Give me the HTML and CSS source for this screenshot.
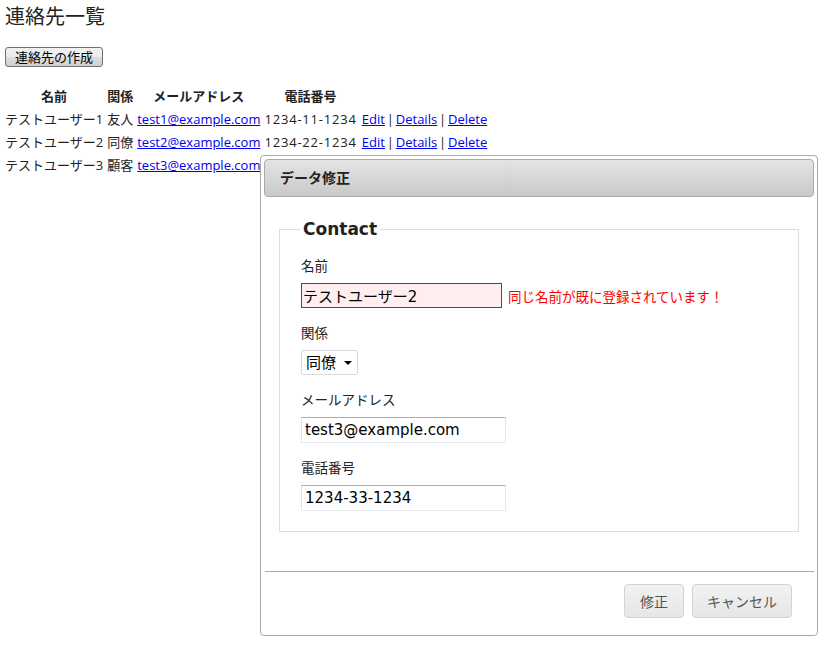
FILE: index.html
```html
<!DOCTYPE html>
<html lang="ja">
<head>
    <meta charset="UTF-8">
    <title>連絡先一覧</title>
    <link rel="stylesheet" href="styles.css">
</head>
<body>
    <h1>連絡先一覧</h1>
    <p class="actions"><button class="create-btn">連絡先の作成</button></p>
    <table class="contacts">
        <tr>
            <th>名前</th>
            <th>関係</th>
            <th>メールアドレス</th>
            <th>電話番号</th>
            <th></th>
        </tr>
        <tr>
            <td>テストユーザー1</td>
            <td>友人</td>
            <td><a href="#">test1@example.com</a></td>
            <td class="phone">1234-11-1234</td>
            <td class="links"><a href="#">Edit</a> | <a href="#">Details</a> | <a href="#">Delete</a></td>
        </tr>
        <tr>
            <td>テストユーザー2</td>
            <td>同僚</td>
            <td><a href="#">test2@example.com</a></td>
            <td class="phone">1234-22-1234</td>
            <td class="links"><a href="#">Edit</a> | <a href="#">Details</a> | <a href="#">Delete</a></td>
        </tr>
        <tr>
            <td>テストユーザー3</td>
            <td>顧客</td>
            <td><a href="#">test3@example.com</a></td>
            <td class="phone">1234-33-1234</td>
            <td class="links"><a href="#">Edit</a> | <a href="#">Details</a> | <a href="#">Delete</a></td>
        </tr>
    </table>

    <div class="dialog">
        <div class="dialog-titlebar">データ修正</div>
        <div class="dialog-content">
            <fieldset>
                <legend>Contact</legend>
                <label for="name">名前</label>
                <div class="field">
                    <input type="text" id="name" class="input-error" value="テストユーザー2">
                    <span class="field-error">同じ名前が既に登録されています！</span>
                </div>
                <label for="relation">関係</label>
                <div class="field">
                    <div class="select-box">同僚<span class="arrow"></span></div>
                </div>
                <label for="email">メールアドレス</label>
                <div class="field">
                    <input type="text" id="email" value="test3@example.com">
                </div>
                <label for="phone">電話番号</label>
                <div class="field">
                    <input type="text" id="phone" value="1234-33-1234">
                </div>
            </fieldset>
        </div>
        <div class="dialog-buttonpane">
            <button class="ui-btn">修正</button>
            <button class="ui-btn">キャンセル</button>
        </div>
    </div>
</body>
</html>
```

FILE: styles.css
```css
body {
    font-family: "Open Sans", "Noto Sans CJK JP", sans-serif;
    font-size: 13px;
    color: #222;
    margin: 0;
    padding: 0 5px;
    background-color: #fff;
}
h1 {
    font-size: 20px;
    font-weight: normal;
    margin: 4px 0 0;
    line-height: 26px;
}
.actions {
    margin: 17px 0 0;
}
.create-btn {
    font-family: inherit;
    font-size: 13px;
    width: 98px;
    height: 20px;
    padding: 0;
    line-height: 16px;
    color: #000;
    border: 1px solid #707070;
    border-radius: 3px;
    background: linear-gradient(#f2f2f2 0%, #ebebeb 50%, #dddddd 51%, #cfcfcf 100%);
}
.contacts {
    border-collapse: collapse;
    margin-top: 18px;
}
.contacts th {
    font-weight: bold;
    text-align: center;
    padding: 0 2px;
    height: 23px;
    line-height: 19px;
}
.contacts td {
    padding: 0 2px;
    height: 23px;
    line-height: 19px;
    white-space: nowrap;
}
.contacts td:first-child, .contacts th:first-child {
    padding-left: 0;
}
.contacts .phone {
    letter-spacing: 0.8px;
}
.contacts .links {
    word-spacing: -1.5px;
    padding-left: 3px;
}
a {
    color: #0000ee;
}
.dialog {
    position: absolute;
    left: 260px;
    top: 155px;
    width: 550px;
    height: 473px;
    padding: 3px;
    border: 1px solid #aaaaaa;
    border-radius: 4px;
    background-color: #fff;
    display: flex;
    flex-direction: column;
}
.dialog-titlebar {
    height: 36px;
    line-height: 36px;
    padding: 0 15px;
    border: 1px solid #aaaaaa;
    border-radius: 4px;
    background: linear-gradient(#e4e4e4, #c9c9c9);
    font-weight: bold;
    font-size: 14px;
    color: #222;
}
.dialog-content {
    padding: 22px 15px 0 15px;
    flex: 1;
}
fieldset {
    border: 1px solid #dddddd;
    margin: 0;
    padding: 17px 21px 20px;
}
legend {
    font-family: "DejaVu Sans", "Noto Sans CJK JP", sans-serif;
    font-weight: bold;
    font-size: 17px;
    color: #222;
    padding: 0 3px;
    margin-left: -1px;
}
label {
    display: block;
    font-size: 13.5px;
    color: #222;
    line-height: 20px;
}
.field {
    display: flex;
    align-items: center;
    margin: 7px 0 15px;
}
fieldset .field:last-of-type {
    margin-bottom: 0;
}
input[type="text"] {
    font-family: "DejaVu Sans", "Noto Sans CJK JP", sans-serif;
    font-size: 15px;
    width: 205px;
    height: 26px;
    box-sizing: border-box;
    padding: 0 3px;
    color: #000;
    border: 1px solid;
    border-color: #abadb3 #e3e9ef #e3e9ef #e2e3ea;
    outline: none;
}
.input-error {
    width: 201px !important;
    height: 25px !important;
    border-color: #ff0000 !important;
    background-color: #ffeeee;
    padding-left: 1px !important;
}
.field-error {
    color: #ff0000;
    font-size: 13.5px;
    margin-left: 6px;
}
.select-box {
    font-size: 15px;
    color: #000;
    width: 57px;
    height: 25px;
    box-sizing: border-box;
    line-height: 23px;
    padding-left: 4px;
    border: 1px solid #d9d9d9;
    border-radius: 2px;
    position: relative;
}
.select-box .arrow {
    position: absolute;
    right: 5px;
    top: 10px;
    width: 0;
    height: 0;
    border-left: 4px solid transparent;
    border-right: 4px solid transparent;
    border-top: 4px solid #000;
}
.dialog-buttonpane {
    border-top: 1px solid #aaaaaa;
    padding: 12px 22px 14px;
    display: flex;
    justify-content: flex-end;
    gap: 8px;
    margin-left: 1px;
}
.ui-btn {
    font-family: "Open Sans", "Noto Sans CJK JP", sans-serif;
    font-size: 14px;
    color: #555555;
    height: 34px;
    padding: 0 15px;
    border: 1px solid #d3d3d3;
    border-radius: 4px;
    background: linear-gradient(#f2f2f2, #e6e6e6);
}
.ui-btn + .ui-btn {
    padding: 0 14px;
}
```
